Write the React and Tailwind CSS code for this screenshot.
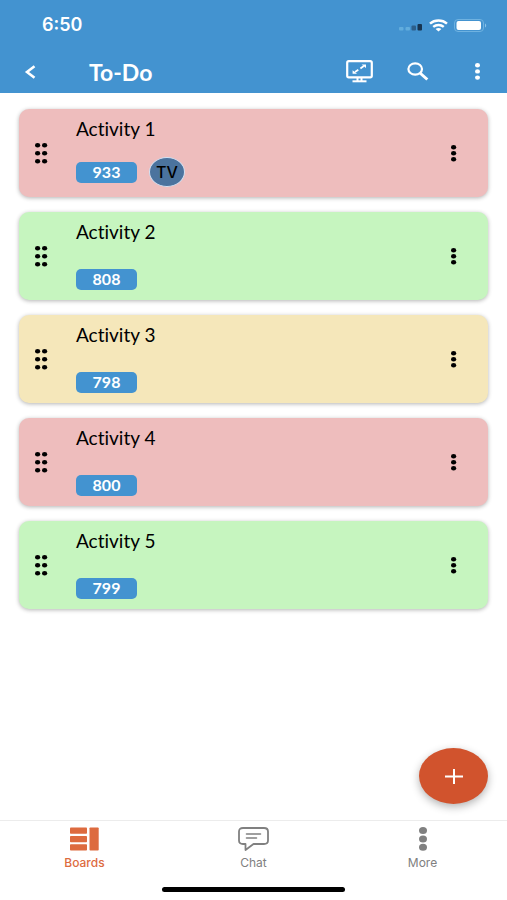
import clsx from 'clsx';

const activities = [
  { id: 1, title: 'Activity 1', count: 933, color: 'bg-[#eebdbd]', member: 'TV' },
  { id: 2, title: 'Activity 2', count: 808, color: 'bg-[#c6f5bf]' },
  { id: 3, title: 'Activity 3', count: 798, color: 'bg-[#f5e7ba]' },
  { id: 4, title: 'Activity 4', count: 800, color: 'bg-[#eebdbd]' },
  { id: 5, title: 'Activity 5', count: 799, color: 'bg-[#c6f5bf]' },
];

function Dots({ width, height, rx, ry, cols = [0], gap }) {
  return (
    <svg width={width} height={height} viewBox={`0 0 ${width} ${height}`} fill="currentColor" aria-hidden="true">
      {cols.map((x) =>
        [0, 1, 2].map((row) => (
          <ellipse key={`${x}-${row}`} cx={x + rx} cy={ry + row * gap} rx={rx} ry={ry} />
        ))
      )}
    </svg>
  );
}

function StatusBar() {
  return (
    <div className="flex h-[50px] items-center justify-between pl-[42px] pr-5">
      <span className="font-['Inter','Liberation_Sans',sans-serif] text-lg font-semibold leading-6">6:50</span>
      <div className="flex items-center gap-1.5">
        {/* signal */}
        <svg width="24" height="12" viewBox="0 0 24 12" aria-hidden="true">
          <rect x="0" y="8" width="4.5" height="3.5" rx="1" fill="#62addd" />
          <rect x="6.5" y="8" width="4.5" height="3.5" rx="1" fill="#62addd" />
          <rect x="12.5" y="6.5" width="4.5" height="5" rx="1" fill="#2d5f8a" />
          <rect x="18.5" y="5" width="4.5" height="6.5" rx="1" fill="#173450" />
        </svg>
        {/* wifi */}
        <svg width="19" height="13" viewBox="0 0 19 13" fill="none" stroke="#fff" strokeWidth="2.4" aria-hidden="true">
          <path d="M1 4.6C5.7 0.4 13.3 0.4 18 4.6" />
          <path d="M4.2 7.9C7.2 5.3 11.8 5.3 14.8 7.9" />
          <path d="M6.6 10C8.4 8.6 10.6 8.6 12.4 10L9.5 12.6Z" fill="#fff" stroke="none" />
        </svg>
        {/* battery */}
        <svg width="33" height="13" viewBox="0 0 33 13" aria-hidden="true">
          <rect x="0.5" y="0.5" width="29" height="12" rx="3.5" fill="none" stroke="#6fb2e0" />
          <rect x="2.5" y="2" width="24.5" height="9" rx="2" fill="#fff" />
          <path d="M31 4.5C32.6 5 32.6 8 31 8.5Z" fill="#8cc3e8" />
        </svg>
      </div>
    </div>
  );
}

function Toolbar() {
  return (
    <div className="flex h-[43px] items-center pl-6 pr-[27px]">
      <button type="button" aria-label="Back" className="flex w-[65px] justify-start">
        <svg width="12" height="14" viewBox="0 0 12 14" fill="none" stroke="currentColor" strokeWidth="2.6" aria-hidden="true">
          <path d="M10.5 1.2L3 7L10.5 12.8" />
        </svg>
      </button>
      <h1 className="flex-1 text-[23px] font-bold leading-6">To-Do</h1>
      <div className="flex items-center">
        <button type="button" aria-label="Present" className="mr-[34px]">
          <svg width="27" height="23" viewBox="0 0 27 23" fill="none" stroke="currentColor" aria-hidden="true">
            <rect x="1.2" y="1.2" width="24.6" height="16.2" rx="1.6" strokeWidth="2.2" />
            <path d="M11.5 17.5V21M15.5 17.5V21" strokeWidth="2" />
            <path d="M6.5 21.3H20.5" strokeWidth="2" />
            <path d="M9 12L12.3 9.8M14.4 8.4L17.8 6" strokeWidth="1.8" />
            <path d="M15.6 4.4H20V8ZM11 13.8H6.6V10.2Z" fill="currentColor" stroke="none" />
          </svg>
        </button>
        <button type="button" aria-label="Search" className="mr-[46px]">
          <svg width="22" height="19" viewBox="0 0 22 19" fill="none" stroke="currentColor" aria-hidden="true">
            <ellipse cx="8.2" cy="7" rx="6.8" ry="5.7" strokeWidth="2.2" />
            <path d="M13 11L20.3 17.5" strokeWidth="3" />
          </svg>
        </button>
        <button type="button" aria-label="Options">
          <Dots width={5} height={17} rx={2.5} ry={2.2} gap={6.2} />
        </button>
      </div>
    </div>
  );
}

function ActivityCard({ activity }) {
  return (
    <li className={clsx('flex min-h-[88px] items-center rounded-[10px] pl-4 pr-[31px] shadow-[0_1px_4px_rgba(0,0,0,0.3)]', activity.color)}>
      <button type="button" aria-label={`Move ${activity.title}`} className="w-[41px]">
        <Dots width={13} height={21} rx={2.6} ry={2.2} cols={[0, 7]} gap={8} />
      </button>
      <div className="flex flex-1 flex-col justify-between self-stretch pb-2.5 pt-2">
        <h2 className="text-[19px] leading-6 [font-variant-ligatures:none]">{activity.title}</h2>
        <div className="flex items-center gap-3">
          <span className="w-[61px] rounded-[5px] bg-[#4393d0] pb-px text-center text-base font-bold leading-5 text-white">
            {activity.count}
          </span>
          {activity.member && (
            <span className="flex h-[30px] w-9 items-center justify-center rounded-[50%] border border-[#d5e2f3] bg-[#4b739e] font-['Inter','Liberation_Sans',sans-serif] text-base font-medium">
              {activity.member}
            </span>
          )}
        </div>
      </div>
      <button type="button" aria-label={`${activity.title} options`}>
        <Dots width={6} height={17} rx={2.6} ry={2.2} gap={6} />
      </button>
    </li>
  );
}

function BottomNav() {
  return (
    <nav className="border-t border-[#ececec] bg-white font-['Inter','Liberation_Sans',sans-serif] text-xs leading-4 text-[#808080]">
      <div className="flex">
        <a href="#boards" className="flex flex-1 flex-col items-center gap-1 pt-1.5 font-medium text-[#dd6b3f]">
          <svg width="29" height="24" viewBox="0 0 29 24" fill="currentColor" aria-hidden="true">
            <rect x="0" y="0.5" width="17" height="6.3" rx="0.8" />
            <rect x="0" y="9" width="17" height="6.3" rx="0.8" />
            <rect x="0" y="17.2" width="17" height="6.3" rx="0.8" />
            <rect x="19.5" y="0.5" width="9.2" height="23" rx="0.8" />
          </svg>
          Boards
        </a>
        <a href="#chat" className="flex flex-1 flex-col items-center gap-1 pt-1.5">
          <svg width="31" height="24" viewBox="0 0 31 24" fill="none" stroke="currentColor" strokeWidth="1.8" strokeLinejoin="round" strokeLinecap="round" aria-hidden="true">
            <path d="M5 1H26Q30 1 30 4.5V13.5Q30 17 26 17H15.5L7.5 23V17H5Q1 17 1 13.5V4.5Q1 1 5 1Z" />
            <path d="M8.5 7H22.5M8.5 11H18.5" strokeWidth="1.6" />
          </svg>
          Chat
        </a>
        <a href="#more" className="flex flex-1 flex-col items-center gap-1 pt-1.5">
          <Dots width={8} height={24} rx={4} ry={3.5} gap={8.4} />
          More
        </a>
      </div>
      <div className="flex justify-center pb-2 pt-4">
        <div className="h-[5px] w-[36%] rounded-full bg-black" />
      </div>
    </nav>
  );
}

export default function App() {
  return (
    <div className="flex min-h-screen flex-col bg-white font-['Lato','Liberation_Sans',sans-serif] text-black">
      <header className="bg-[#4393d0] text-white">
        <StatusBar />
        <Toolbar />
      </header>

      <main className="relative flex-1 px-[19px] pb-20 pt-4">
        <ul className="flex flex-col gap-[15px]">
          {activities.map((activity) => (
            <ActivityCard key={activity.id} activity={activity} />
          ))}
        </ul>

        {/* floating add button */}
        <button
          type="button"
          aria-label="Add activity"
          className="absolute bottom-4 right-[19px] flex h-14 w-[69px] items-center justify-center rounded-[50%] bg-[#d1532d] text-white shadow-[0_3px_8px_rgba(0,0,0,0.3)]"
        >
          <svg width="18" height="15" viewBox="0 0 18 15" stroke="currentColor" strokeWidth="2" aria-hidden="true">
            <path d="M0 7.5H18M9 0V15" />
          </svg>
        </button>
      </main>

      <BottomNav />
    </div>
  );
}
